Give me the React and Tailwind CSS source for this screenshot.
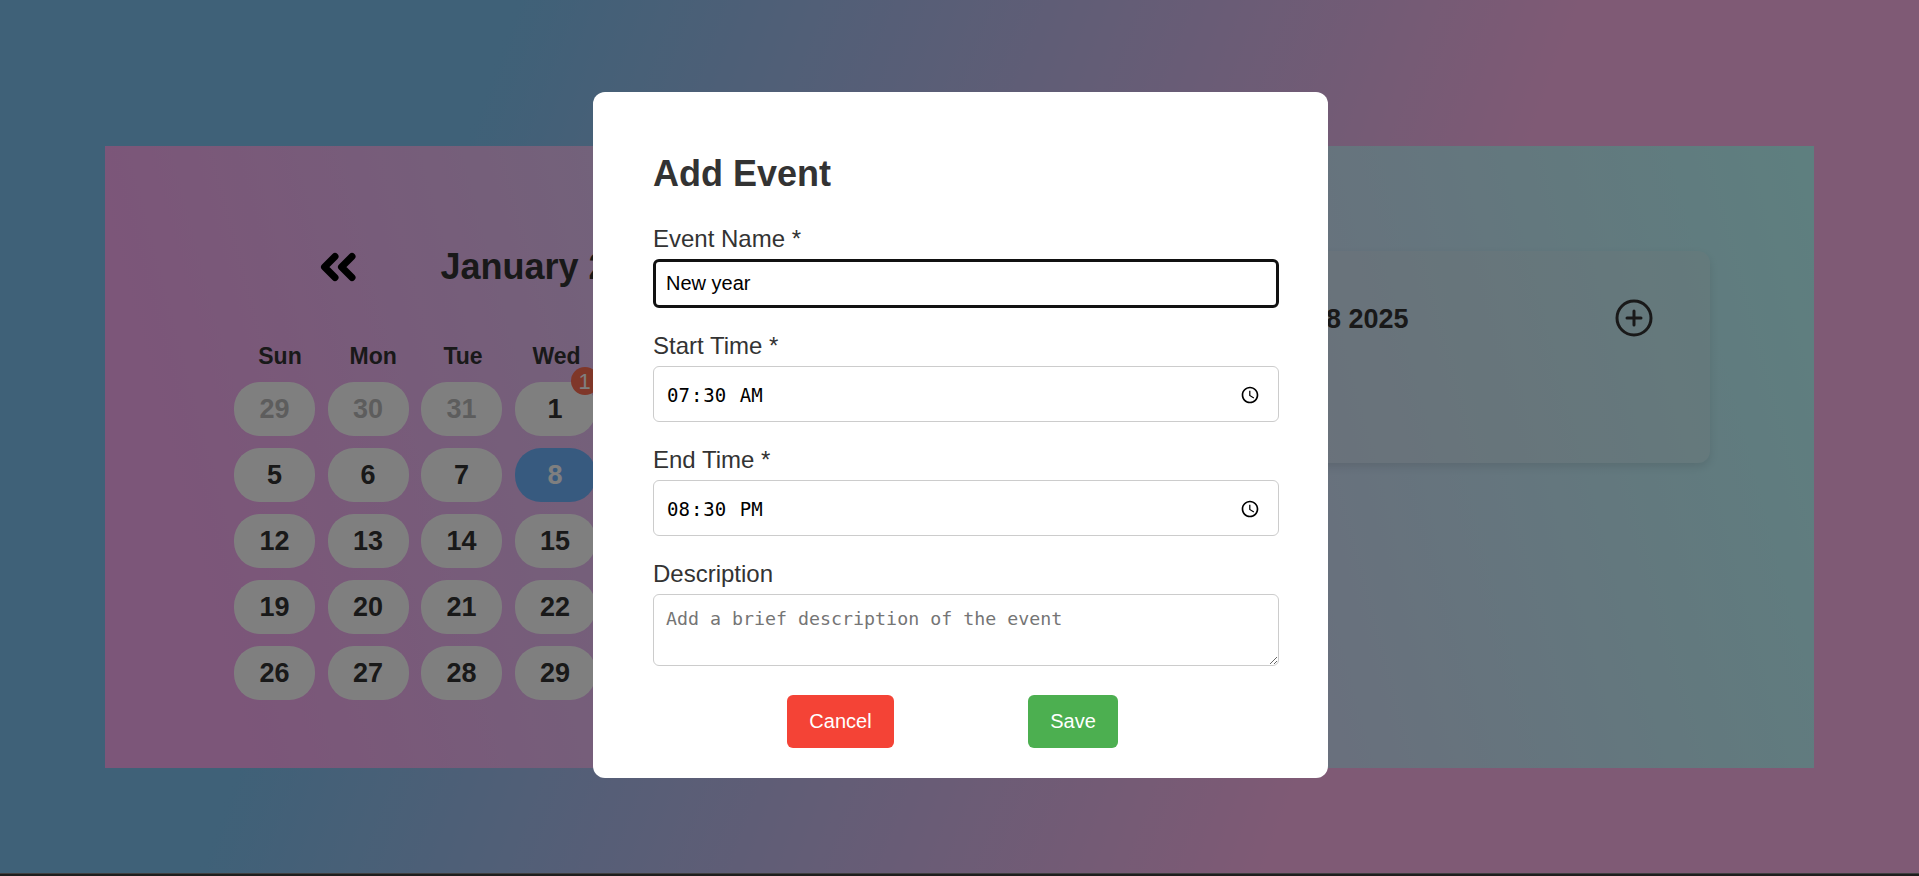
const weekDays = ["Sun", "Mon", "Tue", "Wed", "Thu", "Fri", "Sat"];

const weeks = [
    [29, 30, 31, 1, 2, 3, 4],
    [5, 6, 7, 8, 9, 10, 11],
    [12, 13, 14, 15, 16, 17, 18],
    [19, 20, 21, 22, 23, 24, 25],
    [26, 27, 28, 29, 30, 31, 1],
];

const Field = ({ label, children }) => (
    <div className="flex flex-col">
        <label className="text-[24px] leading-[28px] text-[#333] mb-[5.5px]">{label}</label>
        {children}
    </div>
);

export default function App() {
    return (
        <div className="relative h-[876px] overflow-hidden font-['Liberation_Sans',Arial,sans-serif]">
            <div className="h-[873px] pt-[146px] px-[105px] bg-[linear-gradient(110deg,#7ec2f0_23%,#ffb4ea_71%)]">
                {/* CALENDAR */}
                <div className="h-[622px] flex bg-[linear-gradient(75deg,#f8acf2_8%,#bcffff_100%)]">
                    <div className="w-[1040px] pl-[129px] pt-[99px]">
                        <div className="flex items-center h-[44px] text-[#333]">
                            <svg className="ml-[85px]" width="40" height="32" viewBox="8 9 40 32" fill="none" stroke="#000" strokeWidth="7" strokeLinecap="round" strokeLinejoin="round">
                                <path d="M24 14.5 13.5 25 24 35.5" />
                                <path d="M41 14.5 30.5 25 41 35.5" />
                            </svg>
                            <h2 className="ml-[81.5px] text-[36px] font-bold whitespace-nowrap">January 2025</h2>
                        </div>
                        <div className="flex mt-[53px] ml-[24px] gap-[47.5px] h-[28px] items-center text-[23px] font-bold text-[#333]">
                            {weekDays.map((d) => (
                                <span key={d} className="w-[44px] text-center">{d}</span>
                            ))}
                        </div>
                        <div className="mt-[12px] flex flex-col gap-[12px]">
                            {weeks.map((week, i) => (
                                <div key={i} className="flex gap-[12.5px]">
                                    {week.map((day, j) => {
                                        const muted = i === 0 && j < 3;
                                        const selected = i === 1 && j === 3;
                                        return (
                                            <div
                                                key={j}
                                                className={`relative w-[81px] h-[54px] rounded-[26px] flex items-center justify-center text-[27px] font-bold ${selected ? "bg-[#6fb4ff] text-white" : "bg-white"} ${muted ? "text-[#bbb]" : ""} ${!muted && !selected ? "text-[#333]" : ""}`}
                                            >
                                                {day}
                                                {i === 0 && j === 3 && (
                                                    <span className="absolute -top-[15px] -right-[3px] w-[28px] h-[28px] rounded-full bg-[#ff6e52] text-white text-[22px] font-normal flex items-center justify-center">1</span>
                                                )}
                                            </div>
                                        );
                                    })}
                                </div>
                            ))}
                        </div>
                    </div>

                    {/* SELECTED DAY PANEL */}
                    <div className="mt-[105px] w-[565px] h-[212px] rounded-[12px] bg-[#e5e5e533] shadow-[0_4px_10px_rgba(0,0,0,0.1)] flex items-start justify-between pl-[70px] pr-[57px] pt-[48px]">
                        <span className="mt-[2px] text-[27px] font-bold text-[#333] leading-[36px] whitespace-nowrap">January 8 2025</span>
                        <svg width="38" height="38" viewBox="0 0 38 38" fill="none" stroke="#333" strokeWidth="3" strokeLinecap="round">
                            <circle cx="19" cy="19" r="17" />
                            <path d="M19 12v14M12 19h14" />
                        </svg>
                    </div>
                </div>
            </div>
            <div className="h-[3px] border-t border-[#808080] bg-[#3c3c3c]"></div>

            {/* OVERLAY */}
            <div className="absolute inset-0 bg-black/50"></div>

            {/* MODAL */}
            <div className="absolute top-[92px] left-[593px] w-[735px] h-[686px] bg-white rounded-[12px] pl-[60px] pr-[49px] pt-[61px]">
                <h2 className="text-[36px] leading-[41px] font-bold text-[#333]">Add Event</h2>
                <div className="mt-[31px] flex flex-col gap-[24.5px]">
                    <Field label="Event Name *">
                        <input
                            type="text"
                            defaultValue="New year"
                            className="h-[49px] px-[10px] text-[20px] text-black bg-white border-[3px] border-[#111] rounded-[6px] outline-none"
                        />
                    </Field>
                    <Field label="Start Time *">
                        <input
                            type="time"
                            defaultValue="07:30"
                            className="h-[56px] pl-[12px] pr-[15px] pt-[3px] text-[19px] text-black bg-white border border-[#ccc] rounded-[6px] outline-none font-['DejaVu_Sans_Mono',monospace]"
                        />
                    </Field>
                    <Field label="End Time *">
                        <input
                            type="time"
                            defaultValue="20:30"
                            className="h-[56px] pl-[12px] pr-[15px] pt-[3px] text-[19px] text-black bg-white border border-[#ccc] rounded-[6px] outline-none font-['DejaVu_Sans_Mono',monospace]"
                        />
                    </Field>
                    <Field label="Description">
                        <textarea
                            placeholder="Add a brief description of the event"
                            className="h-[72px] px-[12px] pt-[14px] text-[18.3px] leading-[20px] bg-white border border-[#ccc] rounded-[6px] outline-none placeholder:text-[#757575] font-['DejaVu_Sans_Mono',monospace]"
                        />
                    </Field>
                </div>
                <div className="mt-[29px] pl-[134px] flex gap-[134px]">
                    <button className="w-[107px] h-[53px] rounded-[6px] bg-[#f44336] text-white text-[20px]">Cancel</button>
                    <button className="w-[90px] h-[53px] rounded-[6px] bg-[#4caf50] text-white text-[20px]">Save</button>
                </div>
            </div>
        </div>
    );
}
